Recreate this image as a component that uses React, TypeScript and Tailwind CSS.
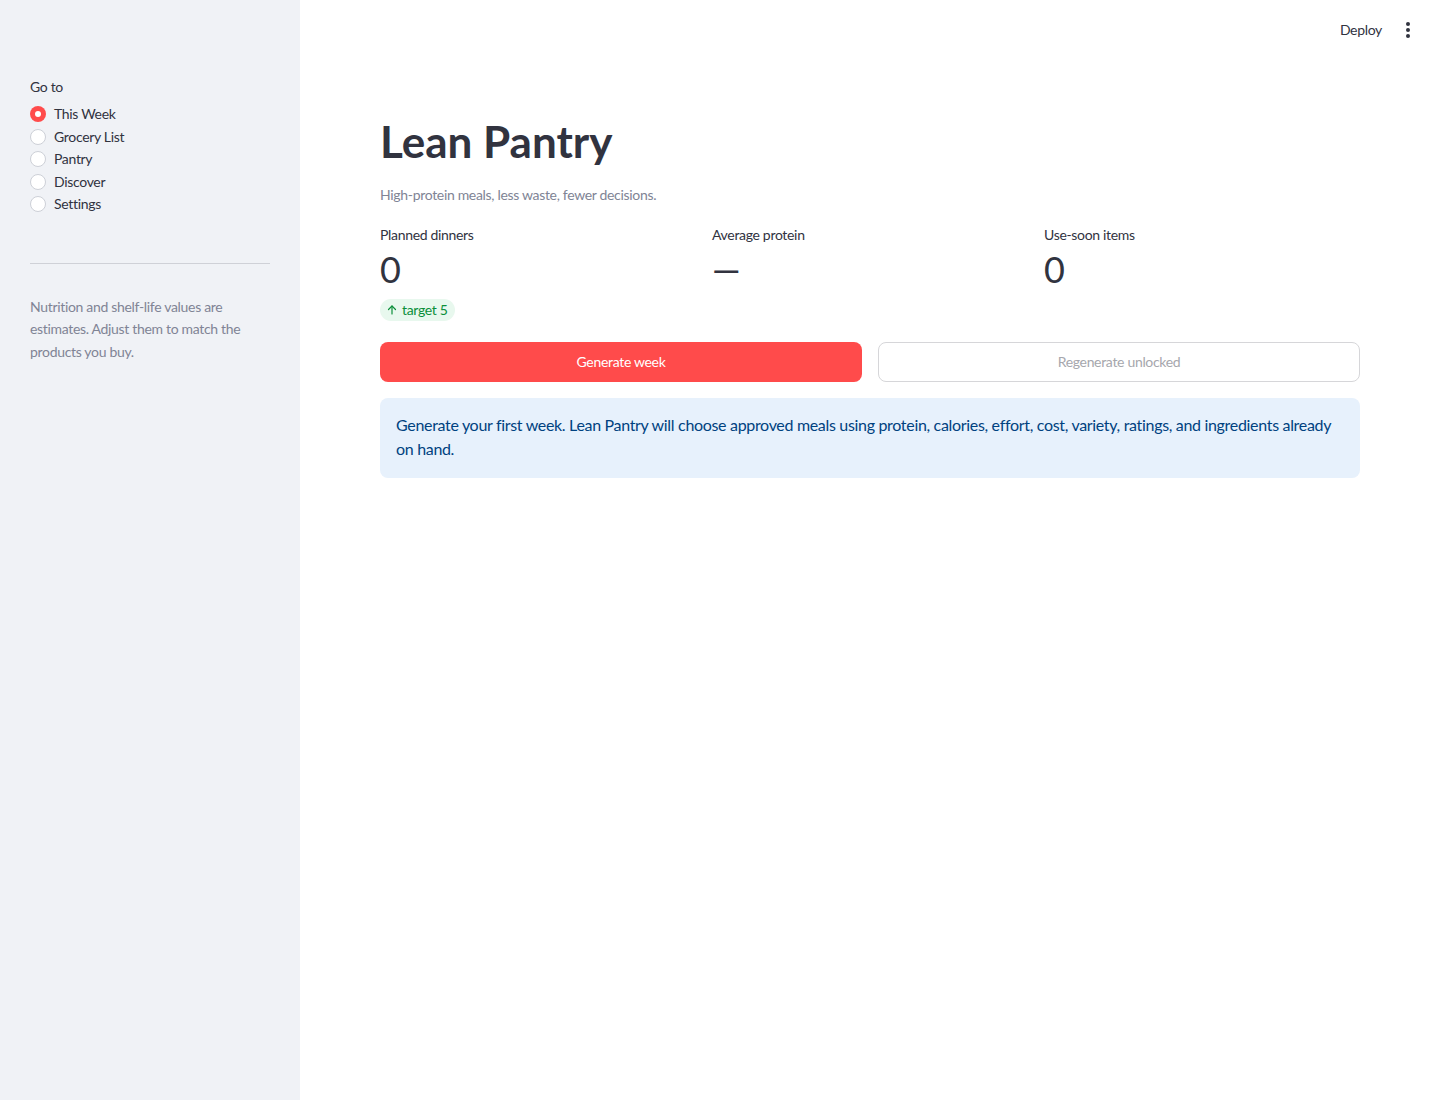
const pages = ['This Week', 'Grocery List', 'Pantry', 'Discover', 'Settings']

function Radio({ label, checked }: { label: string; checked?: boolean }) {
  return (
    <div className="flex items-center gap-2 h-[22.5px]">
      {checked ? (
        <span className="w-4 h-4 rounded-full bg-[#ff4b4b] flex items-center justify-center">
          <span className="w-1.5 h-1.5 rounded-full bg-white" />
        </span>
      ) : (
        <span className="w-4 h-4 rounded-full border border-[#cdd0d7] bg-white" />
      )}
      <span className="text-sm text-[#31333f]">{label}</span>
    </div>
  )
}

function Metric({ label, value, delta }: { label: string; value: string; delta?: string }) {
  return (
    <div className="flex flex-col">
      <div className="text-sm leading-[21px] text-[#31333f]">{label}</div>
      <div className="mt-[3px] text-[36px] leading-[43px] text-[#31333f]">{value}</div>
      {delta && (
        <div className="mt-[8px] self-start h-[22px] flex items-center gap-1 pl-[6px] pr-[7px] rounded-full bg-[#e8f8ee] text-[#0b8f3a] text-sm">
          <svg width="12" height="12" viewBox="0 0 24 24" fill="none" stroke="currentColor" strokeWidth="2.4" strokeLinecap="round" strokeLinejoin="round">
            <path d="M12 20V4" />
            <path d="M5 11l7-7 7 7" />
          </svg>
          {delta}
        </div>
      )}
    </div>
  )
}

export default function App() {
  return (
    <div className="flex min-h-[1100px] bg-white font-['Lato',sans-serif] tracking-[-0.02em] text-[#31333f]">
      <aside className="w-[300px] shrink-0 bg-[#f0f2f6] px-[30px] pt-[76px]">
        <div className="text-sm leading-[21px]">Go to</div>
        <div className="mt-[6px] flex flex-col">
          {pages.map((p, i) => (
            <Radio key={p} label={p} checked={i === 0} />
          ))}
        </div>
        <hr className="mt-[47px] border-0 border-t border-[#cfd1d7]" />
        <p className="mt-[32px] text-sm leading-[22.5px] text-[#808495]">
          Nutrition and shelf-life values are estimates. Adjust them to match the products you buy.
        </p>
      </aside>

      <main className="flex-1 flex flex-col">
        <header className="h-[60px] flex items-center justify-end pr-[24px] gap-[18px]">
          <span className="text-sm text-[#31333f]">Deploy</span>
          <span className="flex flex-col gap-[2px] items-center w-4">
            <span className="w-1 h-1 rounded-full bg-[#31333f]" />
            <span className="w-1 h-1 rounded-full bg-[#31333f]" />
            <span className="w-1 h-1 rounded-full bg-[#31333f]" />
          </span>
        </header>

        <div className="px-20 flex flex-col">
          <h1 className="mt-[55px] text-[44px] leading-[53px] font-bold text-[#31333f] tracking-normal">Lean Pantry</h1>
          <p className="mt-[16px] text-sm leading-[21px] text-[#808495]">High-protein meals, less waste, fewer decisions.</p>

          <div className="mt-[19px] grid grid-cols-3 gap-4">
            <Metric label="Planned dinners" value="0" delta="target 5" />
            <Metric label="Average protein" value="—" />
            <Metric label="Use-soon items" value="0" />
          </div>

          <div className="mt-[21px] grid grid-cols-2 gap-4">
            <button className="h-10 rounded-lg bg-[#ff4b4b] text-white text-sm">Generate week</button>
            <button className="h-10 rounded-lg border border-[#d6d6d9] bg-white text-[#a6a7ad] text-sm">Regenerate unlocked</button>
          </div>

          <div className="mt-4 rounded-lg bg-[#e7f1fc] px-4 pt-[15px] pb-[17px] text-base leading-6 text-[#004280]">
            Generate your first week. Lean Pantry will choose approved meals using protein, calories, effort, cost, variety, ratings, and ingredients already on hand.
          </div>
        </div>
      </main>
    </div>
  )
}
